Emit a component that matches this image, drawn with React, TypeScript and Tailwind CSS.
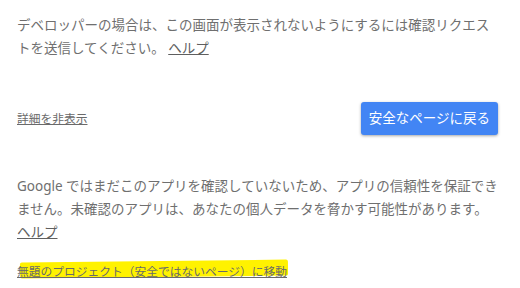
const font = { fontFamily: '"Noto Sans", "Noto Sans CJK JP", sans-serif' };

export default function App() {
  return (
    <div className="h-[288px] w-[520px] overflow-hidden bg-white" style={font}>
      <div className="w-[498px] pl-[17px] pt-[14px] text-[#6f6f6f]">
        <p className="text-[13.5px] leading-[23px]">
          デベロッパーの場合は、この画面が表示されないようにするには確認リクエス
          <br />
          トを送信してください。{' '}
          <a className="text-[#5f5f5f] underline">ヘルプ</a>
        </p>

        <div className="mt-[42px] flex items-center justify-between">
          <a className="text-[11.75px] text-[#6a6a6a] underline">詳細を非表示</a>
          <button
            type="button"
            className="h-[33px] rounded-[3px] bg-[#4285f4] px-[8px] text-[13.5px] text-white shadow-[0_1px_3px_rgba(0,0,0,0.35)]"
          >
            安全なページに戻る
          </button>
        </div>

        <p className="mt-[40px] text-[13.5px] leading-[23px]">
          Google ではまだこのアプリを確認していないため、アプリの信頼性を保証できません。未確認のアプリは、あなたの個人データを脅かす可能性があります。{' '}
          <a className="text-[#5f5f5f] underline">ヘルプ</a>
        </p>

        <div className="mt-[14px]">
          <span className="relative inline-block">
            <span className="absolute left-[3px] right-[-1px] top-[3px] h-[16px] -rotate-[0.6deg] rounded-[2px] bg-[#fff200]" />
            <a className="relative text-[11.75px] text-[#6a6a6a] underline">
              無題のプロジェクト（安全ではないページ）に移動
            </a>
          </span>
        </div>
      </div>
    </div>
  );
}
